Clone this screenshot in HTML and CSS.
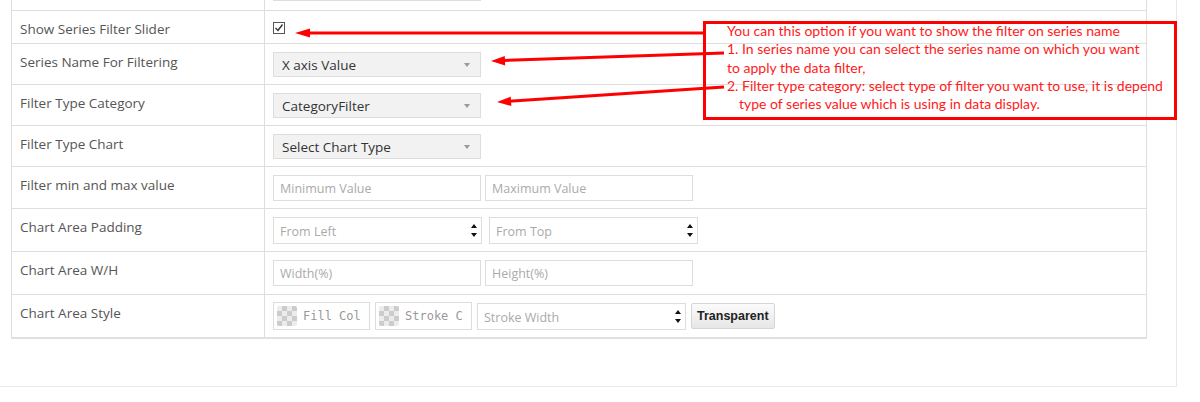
FILE: index.html
```html
<!DOCTYPE html>
<html lang="en">
<head>
    <meta charset="UTF-8">
    <title>Chart Settings</title>
    <link rel="stylesheet" href="styles.css">
</head>
<body>
    <div class="panel">
        <div class="grid">
            <div class="row row-cut">
                <div class="label"></div>
                <div class="field"><input class="input" type="text"></div>
            </div>

            <div class="row row-check">
                <div class="label">Show Series Filter Slider</div>
                <div class="field">
                    <span class="check">
                        <svg width="10" height="10" viewBox="0 0 10 10"><path d="M1.5 5 L4 7.5 L8.5 1.5" fill="none" stroke="#333" stroke-width="1.4"/></svg>
                    </span>
                </div>
            </div>

            <div class="row">
                <div class="label">Series Name For Filtering</div>
                <div class="field"><div class="select">X axis Value<span class="caret"></span></div></div>
            </div>

            <div class="row">
                <div class="label">Filter Type Category</div>
                <div class="field"><div class="select">CategoryFilter<span class="caret"></span></div></div>
            </div>

            <div class="row">
                <div class="label">Filter Type Chart</div>
                <div class="field"><div class="select">Select Chart Type<span class="caret"></span></div></div>
            </div>

            <div class="row row-42">
                <div class="label">Filter min and max value</div>
                <div class="field">
                    <input class="input" type="text" placeholder="Minimum Value">
                    <input class="input" type="text" placeholder="Maximum Value">
                </div>
            </div>

            <div class="row row-43">
                <div class="label">Chart Area Padding</div>
                <div class="field field-wide">
                    <div class="number"><input class="bare" type="text" placeholder="From Left"><span class="spin"><i class="up"></i><i class="down"></i></span></div>
                    <div class="number"><input class="bare" type="text" placeholder="From Top"><span class="spin"><i class="up"></i><i class="down"></i></span></div>
                </div>
            </div>

            <div class="row row-43">
                <div class="label">Chart Area W/H</div>
                <div class="field">
                    <input class="input" type="text" placeholder="Width(%)">
                    <input class="input" type="text" placeholder="Height(%)">
                </div>
            </div>

            <div class="row row-last">
                <div class="label">Chart Area Style</div>
                <div class="field field-style">
                    <div class="color"><span class="swatch"></span><span class="color-text">Fill Col</span></div>
                    <div class="color"><span class="swatch"></span><span class="color-text">Stroke C</span></div>
                    <div class="number number-stroke"><input class="bare" type="text" placeholder="Stroke Width"><span class="spin"><i class="up"></i><i class="down"></i></span></div>
                    <button class="btn">Transparent</button>
                </div>
            </div>
        </div>
    </div>

    <!-- annotation overlay -->
    <div class="note">
        <p>You can this option if you want to show the filter on series name</p>
        <p>1. In series name you can select the series name on which you want</p>
        <p>to apply the data filter,</p>
        <p>2. Filter type category: select type of filter you want to use, it is depend</p>
        <p class="indent">type of series value which is using in data display.</p>
    </div>

    <svg class="arrows" width="1200" height="402" viewBox="0 0 1200 402">
        <line x1="704" y1="33" x2="308" y2="33" stroke="#ff0000" stroke-width="3"/>
        <polygon points="295,33 310,28.5 310,37.5" fill="#ff0000"/>
        <line x1="724" y1="53" x2="503" y2="60.5" stroke="#ff0000" stroke-width="3"/>
        <polygon points="491,61 505.2,65.5 504.8,56.0" fill="#ff0000"/>
        <line x1="724" y1="87" x2="509" y2="101.2" stroke="#ff0000" stroke-width="3"/>
        <polygon points="497,102 511.3,106 510.7,96.6" fill="#ff0000"/>
    </svg>
</body>
</html>
```

FILE: styles.css
```css
body {
    margin: 0;
    background-color: #ffffff;
    font-family: "Open Sans", "Liberation Sans", sans-serif;
    font-size: 13px;
    color: #555555;
    overflow: hidden;
}

.panel {
    width: 1177px;
    box-sizing: border-box;
    margin-top: -32px;
    padding: 0 29px 47px 11px;
    border-right: 1px solid #e8e8e8;
    border-bottom: 1px solid #e8e8e8;
}

.grid {
    width: 1136px;
    box-sizing: border-box;
    border-left: 1px solid #dedede;
    border-right: 1px solid #dedede;
}

.row {
    display: flex;
    height: 41px;
    box-sizing: border-box;
    border-bottom: 1px solid #dedede;
}

.row-cut { height: 43px; }
.row-check { height: 33px; }
.row-42 { height: 42px; }
.row-43 { height: 43px; }

.row-last {
    height: 44px;
    border-bottom: 2px solid #e0e0e0;
}

.label {
    width: 253px;
    box-sizing: border-box;
    padding: 9px 8px 0 8px;
    font-size: 13.5px;
    line-height: 18px;
    border-right: 1px solid #dedede;
}

.field {
    display: flex;
    gap: 4px;
    padding: 8px 0 0 8px;
}

.row-cut .field { padding-top: 7px; }
.row-check .field { padding-top: 11px; }
.field-wide { gap: 7px; }
.field-style { padding-top: 7px; gap: 5px; }

/* checkbox */
.check {
    display: flex;
    align-items: center;
    justify-content: center;
    width: 12px;
    height: 12px;
    box-sizing: border-box;
    border: 1px solid #555;
    background: #fff;
}

/* select boxes */
.select {
    display: flex;
    align-items: center;
    justify-content: space-between;
    width: 208px;
    height: 25px;
    box-sizing: border-box;
    padding: 1px 10px 0 8px;
    background-color: #f2f2f2;
    border: 1px solid #dddddd;
    color: #333333;
    font-size: 13.5px;
}

.caret {
    width: 0;
    height: 0;
    border-left: 3px solid transparent;
    border-right: 3px solid transparent;
    border-top: 4px solid #999;
}

/* text inputs */
.input {
    width: 208px;
    height: 26px;
    box-sizing: border-box;
    margin: 0;
    padding: 1px 6px 0 6px;
    border: 1px solid #dddddd;
    font-family: inherit;
    font-size: 12.5px;
    color: #333;
    outline: none;
}

.input::placeholder,
.bare::placeholder {
    color: #aaaaaa;
}

.number {
    display: flex;
    align-items: center;
    width: 209px;
    height: 27px;
    box-sizing: border-box;
    border: 1px solid #dddddd;
    padding-right: 4px;
}

.number-stroke {
    width: 209px;
    height: 27px;
    margin-top: 1px;
}

.bare {
    flex: 1;
    min-width: 0;
    border: none;
    margin: 0;
    padding: 1px 6px 0 6px;
    font-family: inherit;
    font-size: 12.5px;
    outline: none;
    background: transparent;
}

.spin {
    display: flex;
    flex-direction: column;
    gap: 5px;
}

.spin i {
    width: 0;
    height: 0;
    border-left: 3.5px solid transparent;
    border-right: 3.5px solid transparent;
}

.spin .up { border-bottom: 4px solid #111; }
.spin .down { border-top: 4px solid #111; }

/* color pickers */
.color {
    display: flex;
    align-items: center;
    gap: 6px;
    width: 97px;
    height: 28px;
    box-sizing: border-box;
    padding: 0 4px 0 3px;
    border: 1px solid #dddddd;
    overflow: hidden;
}

.swatch {
    flex: none;
    width: 20px;
    height: 20px;
    border-radius: 2px;
    background: repeating-conic-gradient(#cccccc 0 25%, #ececec 0 50%) 0 0 / 10px 10px;
}

.color-text {
    white-space: nowrap;
    font-family: "DejaVu Sans Mono", "Liberation Mono", monospace;
    font-size: 12px;
    color: #999999;
}

.btn {
    height: 26px;
    margin: 1px 0 0 0;
    padding: 0 5px;
    border: 1px solid #d6d6d6;
    border-radius: 2px;
    background: linear-gradient(#fbfbfb, #e6e6e6);
    font-family: "Liberation Sans", Arial, sans-serif;
    font-weight: bold;
    font-size: 12.5px;
    color: #222222;
}

/* red annotation */
.note {
    position: absolute;
    left: 703px;
    top: 21px;
    width: 474px;
    height: 99px;
    box-sizing: border-box;
    border: 3px solid #ff0000;
    padding: 0 0 0 21px;
    font-family: Lato, "Liberation Sans", sans-serif;
    font-size: 14px;
    line-height: 18.3px;
    color: #ff1a1a;
}

.note p {
    margin: 0;
    white-space: nowrap;
}

.note p:first-child {
    margin-top: -2px;
}

.note .indent {
    padding-left: 12px;
}

.arrows {
    position: absolute;
    left: 0;
    top: 0;
    pointer-events: none;
}
```
